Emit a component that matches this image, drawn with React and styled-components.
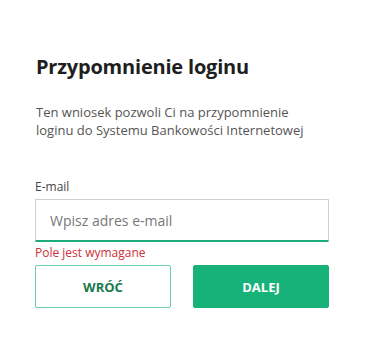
import styled, { createGlobalStyle } from 'styled-components'

const GlobalStyle = createGlobalStyle`
    body {
        margin: 0;
        background: #fff;
        font-family: "Open Sans", "Noto Sans", sans-serif;
    }
`

function App() {
    return (
        <Container>
            <GlobalStyle/>
            <Title>Przypomnienie loginu</Title>
            <Description>
                Ten wniosek pozwoli Ci na przypomnienie loginu do Systemu Bankowości Internetowej
            </Description>
            <Field>
                <Label htmlFor="email">E-mail</Label>
                <Input id="email" placeholder="Wpisz adres e-mail" autoFocus/>
                <Error>Pole jest wymagane</Error>
            </Field>
            <Buttons>
                <Button>WRÓĆ</Button>
                <Button type="filled">DALEJ</Button>
            </Buttons>
        </Container>
    )
}

export default App

const Container = styled.div`
    width: 294px;
    padding: 53px 0 0 35px;
`

const Title = styled.h1`
    margin: 0 0 0 1px;
    font-size: 20px;
    font-weight: 700;
    color: #1e1e1e;
    letter-spacing: -0.2px;
`

const Description = styled.p`
    margin: 23px 0 0 1px;
    width: 285px;
    font-size: 13px;
    line-height: 18px;
    color: #555;
`

const Field = styled.div`
    margin-top: 39px;
    display: flex;
    flex-direction: column;
`

const Label = styled.label`
    font-size: 12px;
    color: #444;
    margin-bottom: 4px;
`

const Input = styled.input`
    box-sizing: border-box;
    height: 43px;
    padding: 0 14px;
    border: 1px solid #cfcfcf;
    border-bottom: 2px solid #1bac7a;
    border-radius: 1px;
    font-family: inherit;
    font-size: 14px;
    outline: none;
    color: #333;
    &::placeholder {
        color: #777;
    }
`

const Error = styled.span`
    font-size: 12px;
    color: #d0303a;
    margin-top: 2px;
`

const Buttons = styled.div`
    margin-top: 4px;
    display: grid;
    grid-template-columns: 1fr 1fr;
    gap: 22px;
`

const Button = styled.button`
    height: 43px;
    border-radius: 2px;
    font-family: inherit;
    font-size: 13px;
    font-weight: 700;
    cursor: pointer;
    border: 1px solid ${props => props.type === "filled" ? "#16b27a" : "#6acfa8"};
    background-color: ${props => props.type === "filled" ? "#16b27a" : "#fff"};
    color: ${props => props.type === "filled" ? "#fff" : "#17794c"};
`
